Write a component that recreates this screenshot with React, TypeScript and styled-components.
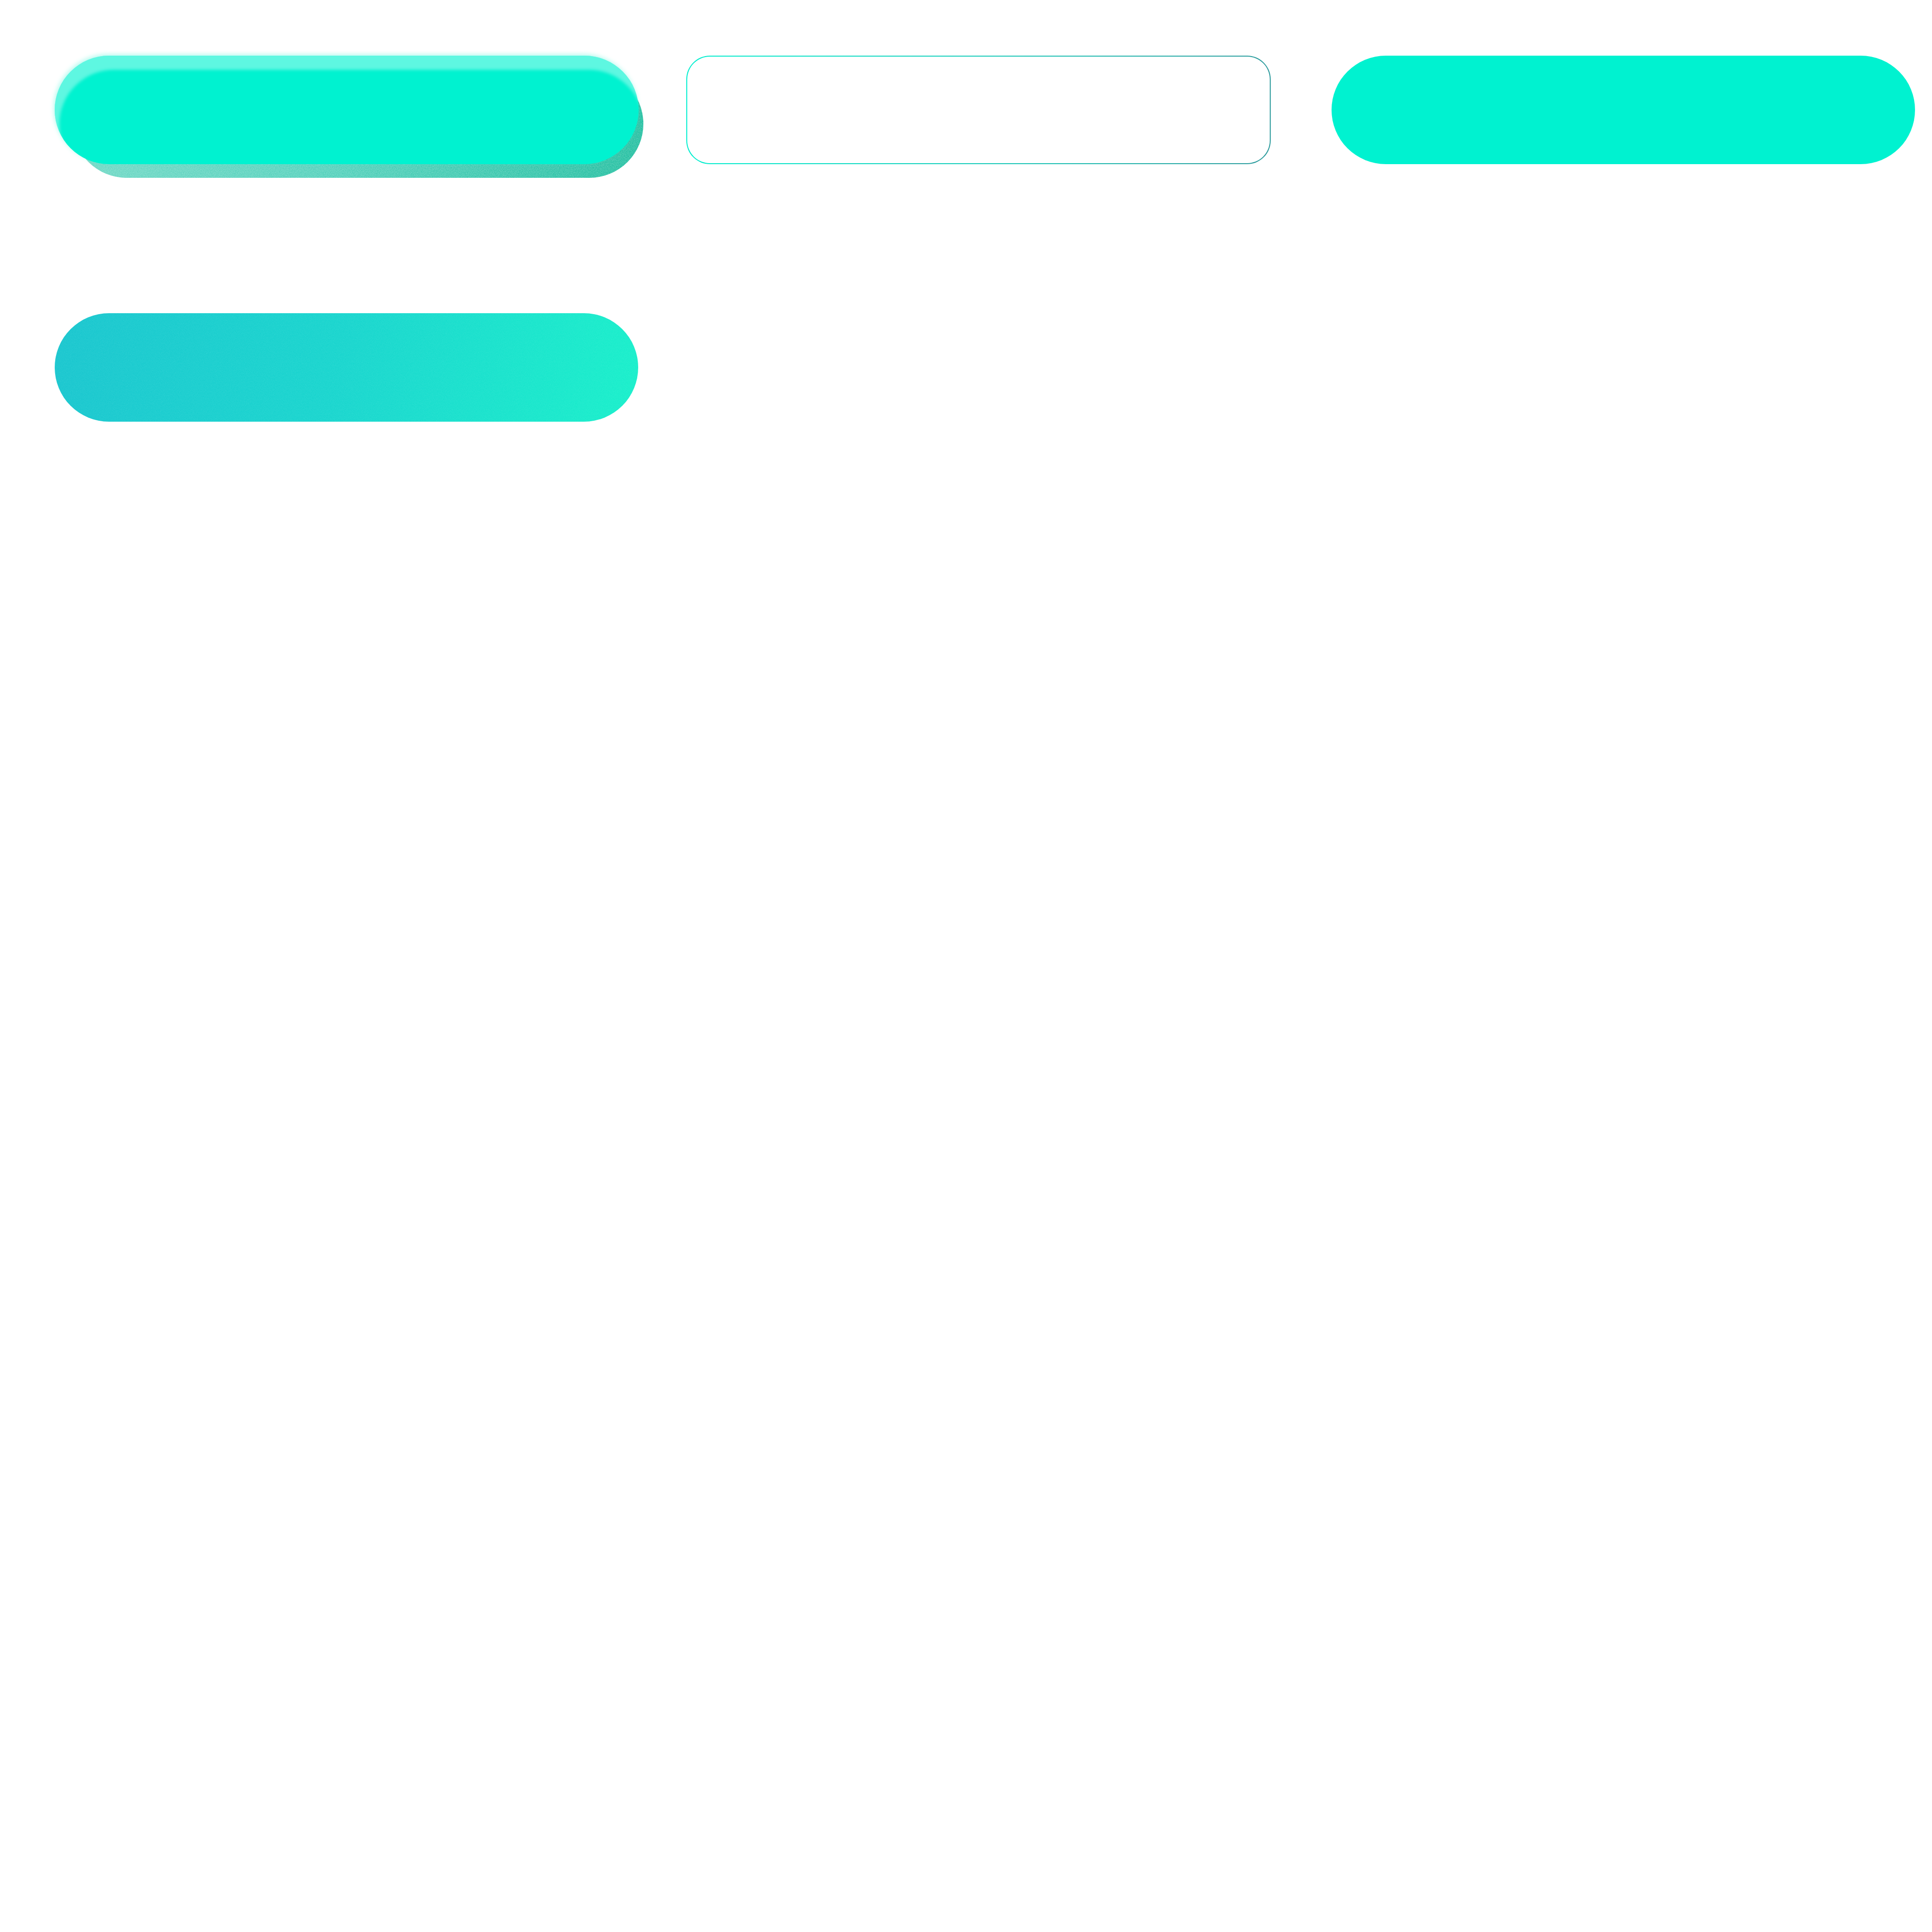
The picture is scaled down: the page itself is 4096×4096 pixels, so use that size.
import React from "react";
import styled, { createGlobalStyle } from "styled-components";

const Global = createGlobalStyle`
  html, body { margin: 0; padding: 0; background: #ffffff; }
  body { font-family: "Liberation Sans", Arial, sans-serif; }
`;

const Page = styled.div`
  width: 4096px;
  height: 4096px;
  box-sizing: border-box;
  padding: 118px 0 0 116px;
  background: #ffffff;
  display: flex;
  flex-direction: column;
  gap: 316px;
`;

const Row = styled.div`
  display: flex;
  align-items: flex-start;
`;

const Slot = styled.div<{ $offset?: number; $w: number }>`
  margin-left: ${(p) => p.$offset ?? 0}px;
  width: ${(p) => p.$w}px;
  height: 230px;
  position: relative;
  isolation: isolate;
  flex: none;
`;

const DepthLayer = styled.div`
  position: absolute;
  left: 38px;
  top: 30px;
  right: -10px;
  bottom: -29px;
  border-radius: 115px;
  overflow: hidden;
  z-index: 0;
  background: linear-gradient(90deg, #6cd8c4 0%, #4fd0ba 45%, #1ebe9f 100%);
`;

const GlossFace = styled.button`
  position: relative;
  z-index: 1;
  display: block;
  width: 100%;
  height: 100%;
  border: none;
  padding: 0;
  border-radius: 115px;
  background: #00f2d0;
  box-shadow: inset 10px 30px 6px rgba(255, 255, 255, 0.37),
    -2px -3px 10px rgba(94, 245, 220, 0.45);
  cursor: pointer;
`;

const OutlineButton = styled.button`
  display: block;
  width: 100%;
  height: 100%;
  box-sizing: border-box;
  padding: 0;
  border: 2px solid transparent;
  border-radius: 50px;
  background: linear-gradient(#ffffff, #ffffff) padding-box,
    linear-gradient(90deg, #00efcf 0%, #14cbb9 50%, #2c9a9c 100%) border-box;
  cursor: pointer;
`;

const SolidButton = styled.button`
  display: block;
  width: 100%;
  height: 100%;
  border: none;
  padding: 0;
  border-radius: 115px;
  background: #00f2d0;
  cursor: pointer;
`;

const GradientButton = styled.button`
  position: relative;
  display: block;
  width: 100%;
  height: 100%;
  border: none;
  padding: 0;
  border-radius: 115px;
  overflow: hidden;
  background: linear-gradient(100deg, #19c6cf 0%, #18d6ce 50%, #18f0cb 100%);
  cursor: pointer;
`;

const Grain = styled.svg<{ $opacity: number }>`
  position: absolute;
  inset: 0;
  width: 100%;
  height: 100%;
  opacity: ${(p) => p.$opacity};
  pointer-events: none;
`;

function Noise({ id, opacity, freq }: { id: string; opacity: number; freq: number }) {
  return (
    <Grain $opacity={opacity} preserveAspectRatio="none">
      <filter id={id} x="0" y="0" width="100%" height="100%">
        <feTurbulence type="fractalNoise" baseFrequency={freq} numOctaves={2} stitchTiles="stitch" />
        <feColorMatrix
          type="matrix"
          values="0 0 0 0 1  0 0 0 0 1  0 0 0 0 1  1.6 0 0 0 -0.55"
        />
      </filter>
      <rect width="100%" height="100%" filter={`url(#${id})`} />
    </Grain>
  );
}

export default function App() {
  return (
    <>
      <Global />
      <Page>
        <Row>
          <Slot $w={1238}>
            <DepthLayer>
              <Noise id="depth-noise" opacity={0.45} freq={0.85} />
            </DepthLayer>
            <GlossFace aria-label="Glossy button" />
          </Slot>
          <Slot $w={1239} $offset={101}>
            <OutlineButton aria-label="Outline button" />
          </Slot>
          <Slot $w={1237} $offset={129}>
            <SolidButton aria-label="Solid button" />
          </Slot>
        </Row>
        <Row>
          <Slot $w={1237}>
            <GradientButton aria-label="Gradient button">
              <Noise id="grad-noise" opacity={0.12} freq={0.9} />
            </GradientButton>
          </Slot>
        </Row>
      </Page>
    </>
  );
}
